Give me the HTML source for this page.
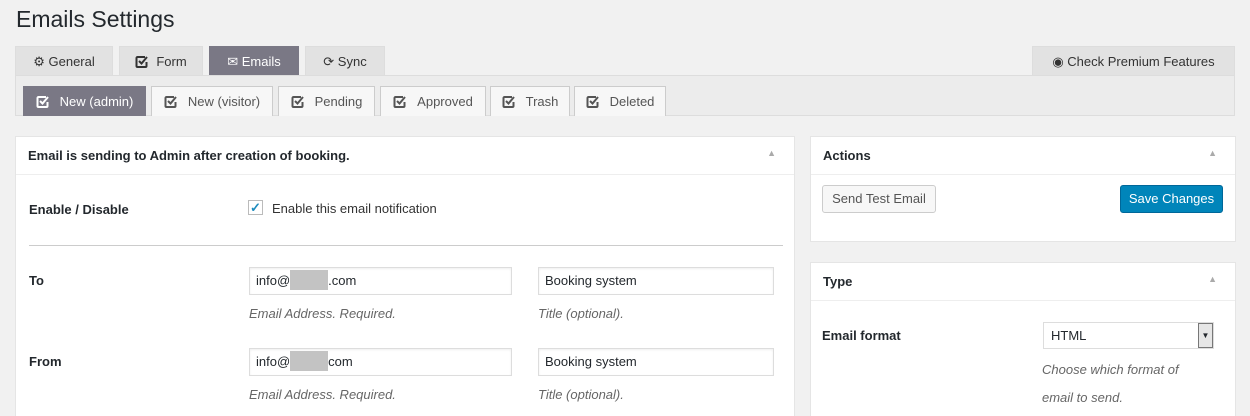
<!DOCTYPE html>
<html><head><style>
html,body{margin:0;width:1250px;height:416px;overflow:hidden}
body{background:#f1f1f1;font-family:"Liberation Sans",sans-serif;font-size:13px;color:#23282d;position:relative}
.a{position:absolute}
.tab{position:absolute;top:46px;height:29px;background:#e2e2e2;border:1px solid #ddd;border-bottom:none;box-sizing:border-box;font-size:13px;line-height:29px;text-align:center;color:#333}
.tab.on{background:#7a7885;color:#fff;border-color:#7a7885}
.st{position:absolute;top:86px;height:30px;background:#f7f7f7;border:1px solid #ccc;border-bottom:none;box-sizing:border-box;line-height:30px;text-align:center;color:#555}
.st.on{background:#7a7885;color:#fff;border-color:#7a7885}
.ic{display:inline-block;width:13px;height:13px;margin-right:11px;vertical-align:-2px}
.panel{position:absolute;background:#fff;border:1px solid #e5e5e5;box-sizing:border-box}
.hd{position:relative;height:37px;border-bottom:1px solid #eee;font-weight:bold;line-height:37px;padding-left:12px;font-size:13px}
.arr{position:absolute;right:18px;top:0;color:#aaa;font-size:9px;line-height:33px;font-weight:normal}
.inp{position:absolute;height:28px;border:1px solid #ddd;box-sizing:border-box;box-shadow:inset 0 1px 2px rgba(0,0,0,.07);line-height:26px;padding-left:6px;background:#fff}
.hint{position:absolute;font-style:italic;color:#666}
.lbl{position:absolute;font-weight:bold}
</style></head><body>
<svg width="0" height="0" style="position:absolute"><defs><symbol id="ck" viewBox="0 0 13 13"><path d="M10 2H2.5A1 1 0 0 0 1.5 3v8a1 1 0 0 0 1 1h8a1 1 0 0 0 1-1V7" fill="none" stroke="currentColor" stroke-width="2"/><path d="M4 6l2.5 2.5L12 2" fill="none" stroke="currentColor" stroke-width="2"/></symbol></defs></svg>
<div class="a" style="left:16px;top:6px;font-size:23px;color:#23282d">Emails Settings</div>
<div class="tab" style="left:15px;width:98px">⚙ General</div>
<div class="tab" style="left:119px;width:84px"><svg class="ic" style="margin-right:8px"><use href="#ck"/></svg>Form</div>
<div class="tab on" style="left:209px;width:90px">✉ Emails</div>
<div class="tab" style="left:305px;width:80px">⟳ Sync</div>
<div class="tab" style="left:1032px;width:203px">◉ Check Premium Features</div>
<div class="a" style="left:15px;top:75px;width:1220px;height:41px;background:#ececec;border:1px solid #ddd;box-sizing:border-box"></div>
<div class="st on" style="left:23px;width:123px"><svg class="ic"><use href="#ck"/></svg>New (admin)</div>
<div class="st" style="left:151px;width:122px"><svg class="ic"><use href="#ck"/></svg>New (visitor)</div>
<div class="st" style="left:278px;width:97px"><svg class="ic"><use href="#ck"/></svg>Pending</div>
<div class="st" style="left:380px;width:106px"><svg class="ic"><use href="#ck"/></svg>Approved</div>
<div class="st" style="left:490px;width:80px"><svg class="ic"><use href="#ck"/></svg>Trash</div>
<div class="st" style="left:574px;width:92px"><svg class="ic"><use href="#ck"/></svg>Deleted</div>

<div class="panel" style="left:15px;top:136px;width:780px;height:290px">
<div class="hd">Email is sending to Admin after creation of booking.<span class="arr">▲</span></div>
</div>
<div class="lbl" style="left:29px;top:202px">Enable / Disable</div>
<div class="a" style="left:248px;top:200px;width:15px;height:15px;border:1px solid #bbb;box-sizing:border-box;color:#1e8cbe;font-size:13px;line-height:13px;text-align:center;font-weight:bold">✓</div>
<div class="a" style="left:272px;top:201px;color:#333">Enable this email notification</div>
<div class="a" style="left:29px;top:245px;width:754px;height:1px;background:#ccc"></div>
<div class="lbl" style="left:29px;top:273px">To</div>
<div class="inp" style="left:249px;top:267px;width:263px">info@<span style="display:inline-block;width:38px;height:20px;background:#c3c3c3;vertical-align:-5px"></span>.com</div>
<div class="inp" style="left:538px;top:267px;width:236px">Booking system</div>
<div class="hint" style="left:249px;top:306px">Email Address. Required.</div>
<div class="hint" style="left:538px;top:306px">Title (optional).</div>
<div class="lbl" style="left:29px;top:354px">From</div>
<div class="inp" style="left:249px;top:348px;width:263px">info@<span style="display:inline-block;width:38px;height:20px;background:#c3c3c3;vertical-align:-5px"></span>com</div>
<div class="inp" style="left:538px;top:348px;width:236px">Booking system</div>
<div class="hint" style="left:249px;top:387px">Email Address. Required.</div>
<div class="hint" style="left:538px;top:387px">Title (optional).</div>

<div class="panel" style="left:810px;top:136px;width:426px;height:106px">
<div class="hd">Actions<span class="arr">▲</span></div>
<div class="a" style="left:11px;top:48px;width:114px;height:28px;border:1px solid #ccc;border-radius:3px;background:#f7f7f7;box-sizing:border-box;line-height:26px;text-align:center;color:#555">Send Test Email</div>
<div class="a" style="left:309px;top:48px;width:103px;height:28px;border:1px solid #006799;border-radius:3px;background:#0085ba;box-sizing:border-box;line-height:26px;text-align:center;color:#fff">Save Changes</div>
</div>
<div class="panel" style="left:810px;top:262px;width:426px;height:170px">
<div class="hd">Type<span class="arr">▲</span></div>
</div>
<div class="lbl" style="left:822px;top:328px">Email format</div>
<div class="a" style="left:1043px;top:322px;width:171px;height:27px;border:1px solid #ddd;box-sizing:border-box;line-height:25px;padding-left:7px;background:#fff">HTML<span class="a" style="right:0;top:0;width:15px;height:25px;border:1px solid #777;box-sizing:border-box;background:#e6e6e6;font-size:8px;text-align:center;line-height:23px">▼</span></div>
<div class="hint" style="left:1042px;top:362px">Choose which format of</div>
<div class="hint" style="left:1042px;top:390px">email to send.</div>
</body></html>
